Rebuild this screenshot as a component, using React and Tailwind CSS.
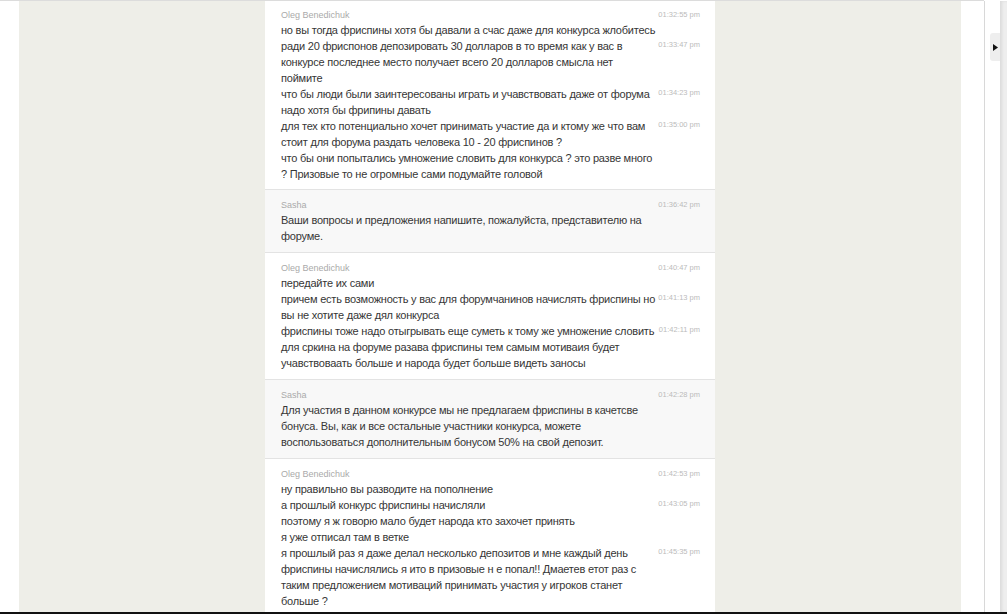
import React from 'react';

const groups = [
  {
    name: 'Oleg Benedichuk',
    time: '01:32:55 pm',
    alt: false,
    first: true,
    msgs: [
      { lines: ['но вы тогда фриспины хотя бы давали а счас даже для конкурса жлобитесь'] },
      {
        time: '01:33:47 pm',
        lines: [
          'ради 20 фриспонов депозировать 30 долларов в то время как у вас в',
          'конкурсе последнее место получает всего 20 долларов смысла нет',
          'поймите',
        ],
      },
      {
        time: '01:34:23 pm',
        lines: ['что бы люди были заинтересованы играть и учавствовать даже от форума', 'надо хотя бы фрипины давать'],
      },
      {
        time: '01:35:00 pm',
        lines: ['для тех кто потенциально хочет принимать участие да и ктому же что вам', 'стоит для форума раздать человека 10 - 20 фриспинов ?'],
      },
      {
        lines: ['что бы они попытались умножение словить для конкурса ? это разве много', '? Призовые то не огромные сами подумайте головой'],
      },
    ],
  },
  {
    name: 'Sasha',
    time: '01:36:42 pm',
    alt: true,
    msgs: [{ lines: ['Ваши вопросы и предложения напишите, пожалуйста, представителю на', 'форуме.'] }],
  },
  {
    name: 'Oleg Benedichuk',
    time: '01:40:47 pm',
    alt: false,
    msgs: [
      { lines: ['передайте их сами'] },
      { time: '01:41:13 pm', lines: ['причем есть возможность у вас для форумчанинов начислять фриспины но', 'вы не хотите даже дял конкурса'] },
      {
        time: '01:42:11 pm',
        lines: [
          'фриспины тоже надо отыгрывать еще суметь к тому же умножение словить',
          'для сркина на форуме разава фриспины тем самым мотиваия будет',
          'учавствоваать больше и народа будет больше видеть заносы',
        ],
      },
    ],
  },
  {
    name: 'Sasha',
    time: '01:42:28 pm',
    alt: true,
    msgs: [
      {
        lines: [
          'Для участия в данном конкурсе мы не предлагаем фриспины в качетсве',
          'бонуса. Вы, как и все остальные участники конкурса, можете',
          'воспользоваться дополнительным бонусом 50% на свой депозит.',
        ],
      },
    ],
  },
  {
    name: 'Oleg Benedichuk',
    time: '01:42:53 pm',
    alt: false,
    msgs: [
      { lines: ['ну правильно вы разводите на пополнение'] },
      { time: '01:43:05 pm', lines: ['а прошлый конкурс фриспины начисляли'] },
      { lines: ['поэтому я ж говорю мало будет народа кто захочет принять'] },
      { lines: ['я уже отписал там в ветке'] },
      {
        time: '01:45:35 pm',
        lines: [
          'я прошлый раз я даже делал несколько депозитов и мне каждый день',
          'фриспины начислялись я ито в призовые н е попал!! Дмаетев етот раз с',
          'таким предложением мотиваций принимать участия у игроков станет',
          'больше ?',
        ],
      },
    ],
  },
];

function Group({ g }) {
  return (
    <div
      className={`border-b border-[#e3e3e3] pl-[16px] pr-[15px] ${g.alt ? 'bg-[#f8f8f8]' : 'bg-white'} ${
        g.first ? 'pt-[5px] pb-[7px]' : 'pt-[6px] pb-[8px]'
      }`}
    >
      <div className="flex h-[16px] items-end justify-between pb-[2px]">
        <span className="text-[9px] leading-[10px] text-[#aaaaaa]">{g.name}</span>
        <span className="whitespace-nowrap text-[7.5px] leading-[10px] text-[#bbbbbb]">{g.time}</span>
      </div>
      {g.msgs.map((m, i) => (
        <div key={i} className="flex">
          <div className="min-w-0 flex-1 text-[11px] leading-[16px] tracking-[-0.22px] text-[#363636]">
            {m.lines.map((l, j) => (
              <div key={j} className="whitespace-nowrap">
                {l}
              </div>
            ))}
          </div>
          <div className="shrink-0 whitespace-nowrap text-right text-[7.5px] leading-[14px] text-[#bbbbbb]">{m.time}</div>
        </div>
      ))}
    </div>
  );
}

export default function App() {
  return (
    <div className="relative flex h-[614px] w-full flex-col overflow-hidden bg-white font-['Liberation_Sans',Arial,sans-serif]">
      <div className="h-[1px] w-[984px] shrink-0 bg-[#dcdcdc]" />
      <div className="flex min-h-0 flex-1">
        <div className="w-[19px] shrink-0 bg-white" />
        <div className="flex w-[942px] shrink-0 justify-center overflow-hidden bg-[#eeeee8]">
          <div className="w-[450px] shrink-0">
            {groups.map((g, i) => (
              <Group key={i} g={g} />
            ))}
          </div>
        </div>
        <div className="w-[23px] shrink-0 bg-white" />
        <div className="w-[1px] shrink-0 bg-[#d8d8d8]" />
        <div className="w-[15px] shrink-0 bg-white" />
        <div className="relative flex-1 bg-[#eeeeee] shadow-[inset_2px_0_3px_rgba(0,0,0,0.08)]">
          <div className="absolute left-[-10px] top-[32px] flex h-[28px] w-[10px] items-center justify-center rounded-l-[3px] bg-[#eeeeee]">
            <svg width="5" height="7" viewBox="0 0 5 7">
              <path d="M0 0 L5 3.5 L0 7 Z" fill="#111" />
            </svg>
          </div>
        </div>
      </div>
      <div className="h-[2px] w-full shrink-0 bg-[#111111]" />
    </div>
  );
}
